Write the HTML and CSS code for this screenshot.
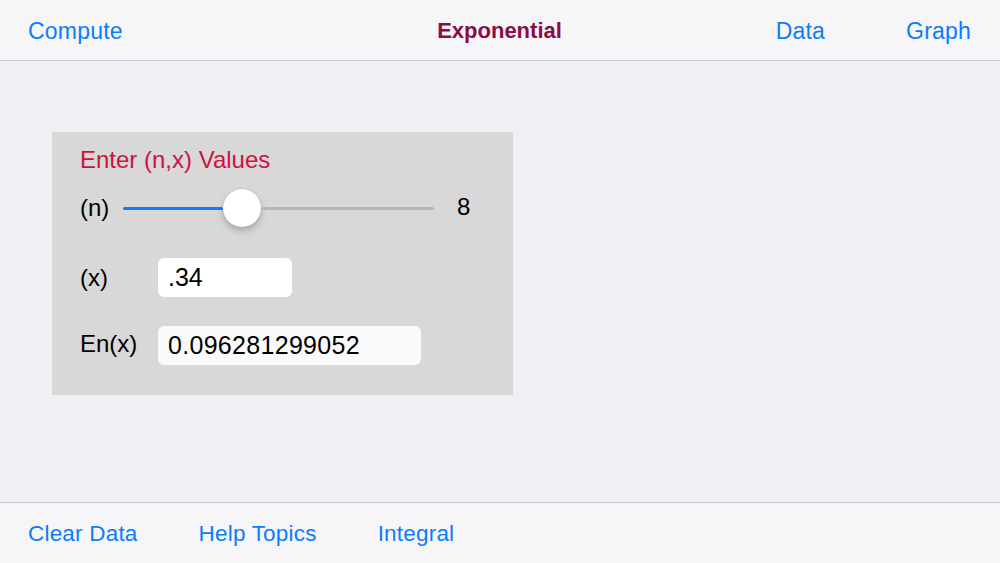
FILE: index.html
```html
<!DOCTYPE html>
<html>
<head>
<meta charset="utf-8">
<link rel="stylesheet" href="styles.css">
</head>
<body>
<div class="app">
  <header class="topbar">
    <div class="nav-left"><span class="nav-btn">Compute</span></div>
    <div class="nav-title">Exponential</div>
    <div class="nav-right"><span class="nav-btn">Data</span><span class="nav-btn">Graph</span></div>
  </header>
  <main class="content">
    <section class="panel">
      <div class="panel-title">Enter (n,x) Values</div>
      <div class="row row-slider">
        <span class="label label-n">(n)</span>
        <div class="slider">
          <div class="track track-fill"></div>
          <div class="thumb"></div>
          <div class="track track-empty"></div>
        </div>
        <span class="slider-value">8</span>
      </div>
      <div class="row row-x">
        <span class="label">(x)</span>
        <div class="field field-x">.34</div>
      </div>
      <div class="row row-en">
        <span class="label">En(x)</span>
        <div class="field field-en">0.096281299052</div>
      </div>
    </section>
  </main>
  <footer class="bottombar">
    <span class="nav-btn">Clear Data</span>
    <span class="nav-btn">Help Topics</span>
    <span class="nav-btn">Integral</span>
  </footer>
</div>
</body>
</html>
```

FILE: styles.css
```css
html, body {
  margin: 0;
  padding: 0;
}
body {
  width: 1000px;
  height: 563px;
  overflow: hidden;
  font-family: "Liberation Sans", Arial, sans-serif;
  background: #efeff4;
}
.app {
  display: flex;
  flex-direction: column;
  height: 563px;
}
.topbar {
  height: 60px;
  flex: none;
  box-sizing: border-box;
  background: #f6f6f8;
  display: grid;
  grid-template-columns: 1fr auto 1fr;
  align-items: center;
  padding: 2px 29px 0 28px;
}
.content {
  flex: 1;
  border-top: 1px solid #c9c9ce;
  border-bottom: 1px solid #c9c9ce;
  padding: 71px 0 0 52px;
}
.nav-btn {
  color: #0c7cfc;
  font-size: 23px;
  letter-spacing: 0.2px;
  line-height: 28px;
}
.nav-title {
  color: #8b0c46;
  font-weight: bold;
  font-size: 22px;
  line-height: 28px;
}
.nav-right {
  display: flex;
  justify-content: flex-end;
  gap: 81px;
}
.panel {
  width: 461px;
  height: 263px;
  box-sizing: border-box;
  background: #d8d8d8;
  padding: 14px 0 0 28px;
  display: flex;
  flex-direction: column;
}
.panel-title {
  color: #cf1140;
  font-size: 24px;
  line-height: 28px;
  height: 28px;
}
.row {
  display: flex;
  align-items: center;
}
.row-slider {
  margin-top: 15px;
  height: 38px;
}
.row-x {
  margin-top: 31px;
  height: 39px;
}
.row-en {
  margin-top: 29px;
  height: 39px;
}
.label {
  width: 78px;
  flex: none;
  font-size: 24px;
  color: #000;
  line-height: 28px;
}
.row-en .label {
  position: relative;
  top: -2px;
}
.label-n {
  width: 43px;
}
.slider {
  display: flex;
  align-items: center;
  width: 311px;
  height: 38px;
}
.track {
  height: 3px;
  border-radius: 1.5px;
}
.track-fill {
  width: 100px;
  background: #0c7cfc;
}
.track-empty {
  flex: 1;
  background: #b6b6b6;
}
.thumb {
  width: 38px;
  height: 38px;
  border-radius: 50%;
  background: #fff;
  box-shadow: 0 4px 7px rgba(0, 0, 0, 0.22), 0 0 1px rgba(0, 0, 0, 0.25);
  flex: none;
}
.slider-value {
  margin-left: 23px;
  font-size: 24px;
  line-height: 28px;
  margin-top: -2px;
}
.field {
  box-sizing: border-box;
  height: 39px;
  border-radius: 6px;
  background: #fff;
  padding-left: 10px;
  font-size: 25px;
  line-height: 39px;
  color: #000;
}
.field-x {
  width: 134px;
}
.field-en {
  width: 263px;
  background: #fafafa;
  letter-spacing: 0.3px;
}
.bottombar {
  height: 60px;
  flex: none;
  box-sizing: border-box;
  background: #f6f6f8;
  display: flex;
  align-items: center;
  gap: 61px;
  padding: 2px 0 0 28px;
}
.bottombar .nav-btn {
  font-size: 22.5px;
  letter-spacing: 0.2px;
}
```
